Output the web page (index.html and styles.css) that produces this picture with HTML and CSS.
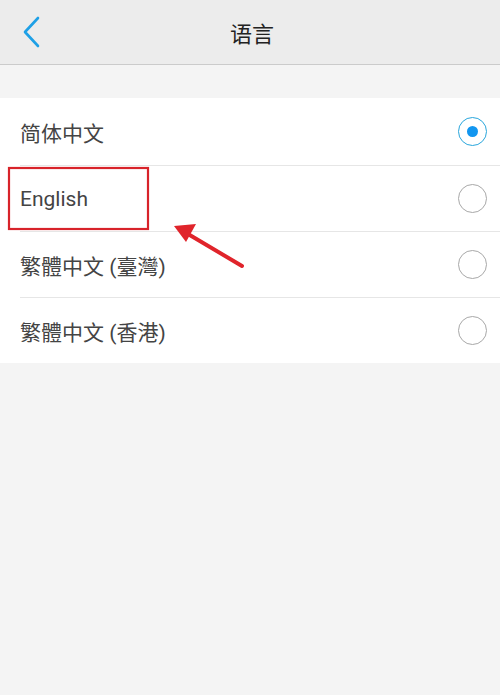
FILE: index.html
```html
<!DOCTYPE html>
<html>

<head>
  <title>语言</title>
  <meta name="viewport" content="initial-scale=1.0">
  <link rel="stylesheet" href="styles.css">
</head>

<body>
  <div class="header">
    <a class="back" href="#">
      <svg width="24" height="34" viewBox="0 0 24 34">
        <polyline points="16,3 3,17 16,31" fill="none" stroke="#1ea0e6" stroke-width="2.6" stroke-linecap="round" stroke-linejoin="round" />
      </svg>
    </a>
    <h1 class="title">语言</h1>
  </div>

  <div class="list">
    <div class="row">
      <span class="name">简体中文</span>
      <span class="radio checked"></span>
    </div>
    <div class="row">
      <span class="name">English</span>
      <span class="radio"></span>
    </div>
    <div class="row">
      <span class="name">繁體中文 (臺灣)</span>
      <span class="radio"></span>
    </div>
    <div class="row">
      <span class="name">繁體中文 (香港)</span>
      <span class="radio"></span>
    </div>
  </div>

  <!-- annotation: red box and arrow -->
  <svg class="mark" width="500" height="695" viewBox="0 0 500 695">
    <rect x="9" y="168" width="139" height="61" fill="none" stroke="#d8232a" stroke-width="2.2" />
    <line x1="242" y1="266" x2="188" y2="234" stroke="#e0242b" stroke-width="4" stroke-linecap="round" />
    <polygon points="174,226 196,224 186,242" fill="#e0242b" />
  </svg>
</body>

</html>
```
FILE: styles.css
```css
body {
  margin: 0;
  background-color: #f4f4f4;
  font-family: "Noto Sans", "Noto Sans CJK SC", sans-serif;
  width: 500px;
  height: 695px;
  position: relative;
  overflow: hidden;
}

.header {
  height: 64px;
  background-color: #ececec;
  border-bottom: 1px solid #cbcbcb;
  display: flex;
  align-items: center;
  justify-content: center;
  position: relative;
}

.back {
  position: absolute;
  left: 22px;
  top: 15px;
  display: flex;
}

.title {
  margin: 0;
  font-family: "Noto Sans CJK SC", sans-serif;
  font-size: 22px;
  font-weight: normal;
  color: #222;
  padding-left: 4px;
}

.list {
  margin-top: 33px;
  background-color: white;
}

.row {
  height: 65px;
  margin-left: 20px;
  padding-right: 13px;
  display: flex;
  align-items: center;
  justify-content: space-between;
  border-top: 1px solid #e6e6e6;
}

.row:first-child {
  border-top: none;
  height: 67px;
}

.name {
  font-size: 21px;
  color: #444;
  font-family: "Roboto", "Noto Sans CJK SC", sans-serif;
}

.radio {
  width: 27px;
  height: 27px;
  border: 1.5px solid #a8a8a8;
  border-radius: 50%;
  display: flex;
  align-items: center;
  justify-content: center;
}

.radio.checked {
  border-color: #29a6dc;
}

.radio.checked::after {
  content: "";
  width: 11px;
  height: 11px;
  border-radius: 50%;
  background-color: #1296f0;
}

.mark {
  position: absolute;
  left: 0;
  top: 0;
  pointer-events: none;
}
```
